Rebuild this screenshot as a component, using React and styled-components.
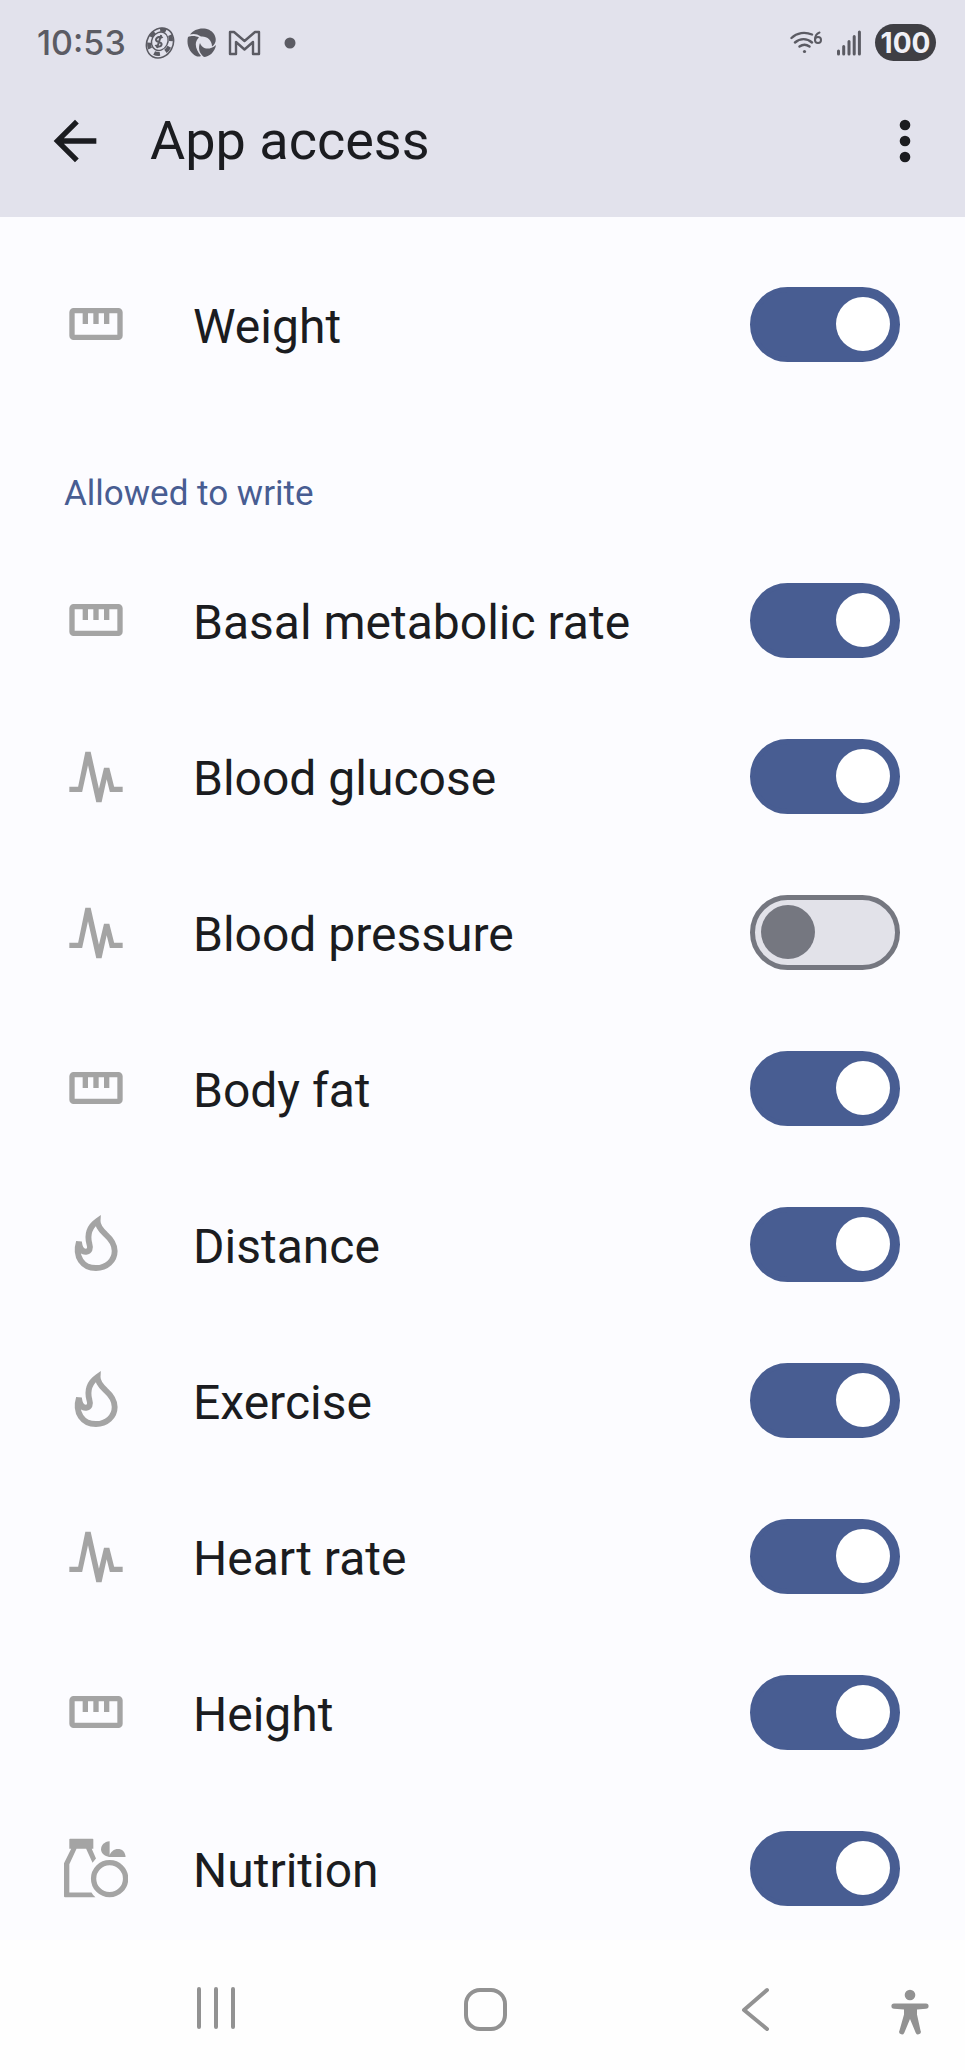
import React, { useState } from "react";
import styled, { createGlobalStyle } from "styled-components";

const GlobalStyle = createGlobalStyle`
  *, *::before, *::after { box-sizing: border-box; }
  body { margin: 0; background: #fcfcff; font-family: Roboto, sans-serif; }
`;

const Screen = styled.div`
  display: flex;
  flex-direction: column;
  height: 100vh;
  color: #1b1c20;
`;

const Header = styled.header`
  flex: none;
  background: #e2e2ec;
`;

const StatusBar = styled.div`
  display: flex;
  align-items: center;
  justify-content: space-between;
  height: 85px;
  padding: 0 29px 0 37px;
  color: #5b5b63;
`;

const StatusGroup = styled.div`
  display: flex;
  align-items: center;
  gap: ${(p) => p.$gap}px;
`;

const Clock = styled.time`
  width: 96px;
  font: 500 34px/40px Inter, sans-serif;
`;

const Battery = styled.span`
  display: flex;
  align-items: center;
  justify-content: center;
  width: 61px;
  height: 37px;
  border-radius: 19px;
  background: #3f3f44;
  color: #f0f0f6;
  font: 700 28px/36px Inter, sans-serif;
`;

const AppBar = styled.div`
  display: flex;
  align-items: center;
  padding: 24px 28px 44px 43px;
`;

const Title = styled.h1`
  flex: 1;
  margin: 0;
  padding-left: 43px;
  font-size: 54px;
  line-height: 64px;
  font-weight: 400;
`;

const IconButton = styled.button`
  display: flex;
  align-items: center;
  justify-content: ${(p) => p.$align || "center"};
  padding: 0;
  border: 0;
  background: none;
  color: inherit;
`;

const Content = styled.main`
  flex: 1;
  min-height: 0;
  overflow-y: auto;
  scrollbar-width: none;
  padding-top: 29px;
`;

const SectionTitle = styled.h2`
  margin: 0;
  padding: 72px 64px 28px;
  color: #485d92;
  font-size: 35px;
  line-height: 40px;
  font-weight: 400;
`;

const List = styled.ul`
  margin: 0;
  padding: 0;
  list-style: none;
`;

const Row = styled.label`
  display: flex;
  align-items: center;
  gap: 65px;
  height: 156px;
  padding: 0 65px 0 64px;
`;

const RowIcon = styled.svg`
  flex: none;
  width: 64px;
  height: 64px;
  color: #a4a4a4;
`;

const RowText = styled.span`
  flex: 1;
  padding-top: 6px;
  font-size: 48px;
  line-height: 60px;
`;

const Switch = styled.input`
  appearance: none;
  flex: none;
  display: grid;
  align-items: center;
  justify-content: start;
  width: 150px;
  height: 75px;
  margin: 0;
  padding: 0 6px;
  border: 5px solid #757780;
  border-radius: 38px;
  background: #e2e2e9;

  &::before {
    content: "";
    width: 54px;
    height: 54px;
    border-radius: 50%;
    background: #757780;
  }

  &:checked {
    justify-content: end;
    padding: 0 5px;
    border-color: #485d92;
    background: #485d92;
  }

  &:checked::before { background: #fff; }
`;

const NavBar = styled.nav`
  flex: none;
  display: grid;
  grid-template-columns: 270fr 270fr 270fr 74fr;
  height: 130px;
  padding: 3px 0 0 81px;
  background: #fefefe;
  color: #929292;
`;

const shapes = {
  ruler: (
    <>
      <rect x="3" y="7" width="18" height="10" rx="0.6" fill="none" stroke="currentColor" strokeWidth="2" />
      <path d="M7 7h2v5H7zM11 7h2v5h-2zM15 7h2v5h-2z" />
    </>
  ),
  pulse: (
    <path d="M2 16H5.3L8 2.9H10L13.1 16.8L15 8.9H17L18.8 16H22V18H17.2L16 13.2L14.1 21.8H12.1L9 8L6.8 18H2Z" />
  ),
  flame: (
    <path
      d="M5.6 11.2C3.9 16.8 7 21 12 21C16 21 19 18.2 19 14.6C19 11.8 17.5 10.1 15.6 8.4C13.7 6.6 12.5 5.2 12.6 3.3C9.6 5.4 8.6 8.4 9.5 11.9C10.1 13.8 9.5 14.8 8.3 14.9C6.8 15 5.9 13.8 5.6 11.2Z"
      fill="none"
      stroke="currentColor"
      strokeWidth="2.2"
    />
  ),
  food: (
    <>
      <path d="M2 1.3Q2 1 2.3 1H10.7Q11 1 11 1.3V4.8H10.4L12 8.4L10.7 10L8.3 4.8H4.7L2 10.6V21.2H10.3Q10.9 22.3 11.8 23H.4Q0 23 0 22.6V10.2L2.7 4.8H2Z" />
      <circle cx="17.1" cy="16" r="6" fill="none" stroke="currentColor" strokeWidth="2" />
      <path d="M17.1 2V7.9C15.1 7.6 13.9 6.5 13.9 5C13.9 3.4 15.1 2.2 17.1 2Z" />
      <path d="M16.7 7.9C17.5 5.9 18.8 4.9 20.2 4.9C21.8 4.9 22.9 5.9 23.1 7.9Z" />
    </>
  ),
};

function ChipIcon() {
  return (
    <svg width="32" height="34" viewBox="0 0 32 34" fill="none" stroke="currentColor" aria-hidden="true">
      <g transform="rotate(28 16 17)">
        <ellipse cx="16" cy="17" rx="13" ry="15.5" strokeWidth="1.6" />
        <ellipse cx="15.5" cy="16" rx="10.5" ry="12.5" strokeWidth="4" strokeDasharray="6 6" />
        <ellipse cx="15" cy="15.5" rx="8" ry="9.5" strokeWidth="1.4" />
      </g>
      <path d="M18.5 12C17 9.6 12.2 11 12 13.8C12 16.8 18 15.400 17.6 18.4C17.2 21.2 12.6 21.4 11.5 18.8M17.2 9L13 22" strokeWidth="2" />
    </svg>
  );
}

function SwirlIcon() {
  return (
    <svg width="30" height="30" viewBox="0 0 30 30" fill="currentColor" aria-hidden="true">
      <path d="M3 6.500C8-1 22-2 27 6C30 11 29 16 25 18.500C25 12 20 8 14 8.500C10 5.500 6 5.500 3 6.500Z" />
      <path d="M1 9C4 7.500 9 7.500 12 9.500C7 14 8 21 14 28C12 29 10 28.500 9 28C3 25 -1 17 1 9Z" />
      <path d="M29 17C28 24 22 29 17 29C12 25 11 20 13 15C15 21 22 23 29 17Z" />
    </svg>
  );
}

function MailIcon() {
  return (
    <svg width="33" height="26" viewBox="0 0 33 26" fill="none" stroke="currentColor" strokeWidth="2.4" strokeLinejoin="round" aria-hidden="true">
      <path d="M2 24V2H6L16.5 11L27 2H31V24H25V12L16.5 19.5L8 12V24Z" />
    </svg>
  );
}

function WifiIcon() {
  return (
    <svg width="33" height="26" viewBox="0 0 33 26" fill="none" stroke="currentColor" strokeWidth="2.4" strokeLinecap="round" aria-hidden="true">
      <path d="M1.5 8C7 2.5 15 1.5 22 4.5M5 12.5C10 8 17 8 22 12.5M9.5 16.5C13 14 16 14 19.5 16.5" />
      <circle cx="14.5" cy="21.5" r="1.6" fill="currentColor" stroke="none" />
      <circle cx="28" cy="10" r="3" strokeWidth="2" />
      <path d="M25 10C25 6 26.5 3.5 29.5 2.5" strokeWidth="2" />
    </svg>
  );
}

function SignalIcon() {
  return (
    <svg width="24" height="26" viewBox="0 0 24 26" stroke="currentColor" strokeWidth="3" strokeLinecap="round" aria-hidden="true">
      <path d="M1.5 21V24M6.7 16.5V24M12 11.5V24M17.2 6.5V24M22.4 2V24" />
    </svg>
  );
}

function Permission({ icon, name, initial = true }) {
  const [on, setOn] = useState(initial);
  return (
    <Row>
      <RowIcon viewBox="0 0 24 24" fill="currentColor" aria-hidden="true">
        {shapes[icon]}
      </RowIcon>
      <RowText>{name}</RowText>
      <Switch type="checkbox" checked={on} onChange={(e) => setOn(e.target.checked)} />
    </Row>
  );
}

const writePermissions = [
  { icon: "ruler", name: "Basal metabolic rate" },
  { icon: "pulse", name: "Blood glucose" },
  { icon: "pulse", name: "Blood pressure", initial: false },
  { icon: "ruler", name: "Body fat" },
  { icon: "flame", name: "Distance" },
  { icon: "flame", name: "Exercise" },
  { icon: "pulse", name: "Heart rate" },
  { icon: "ruler", name: "Height" },
  { icon: "food", name: "Nutrition" },
];

export default function App() {
  return (
    <Screen>
      <GlobalStyle />
      <Header>
        <StatusBar>
          <StatusGroup $gap={11}>
            <Clock>10:53</Clock>
            <ChipIcon />
            <SwirlIcon />
            <MailIcon />
            <svg width="46" height="12" viewBox="0 0 46 12" fill="currentColor" aria-hidden="true">
              <circle cx="18" cy="6" r="5.5" />
            </svg>
          </StatusGroup>
          <StatusGroup $gap={14}>
            <WifiIcon />
            <SignalIcon />
            <Battery>100</Battery>
          </StatusGroup>
        </StatusBar>
        <AppBar>
          <IconButton aria-label="Back">
            <svg width="64" height="64" viewBox="0 0 24 24" fill="currentColor">
              <path d="M20 11H7.83L13.42 5.41L12 4L4 12L12 20L13.41 18.59L7.83 13H20Z" />
            </svg>
          </IconButton>
          <Title>App access</Title>
          <IconButton aria-label="More options">
            <svg width="64" height="64" viewBox="0 0 24 24" fill="currentColor">
              <circle cx="12" cy="6" r="2" />
              <circle cx="12" cy="12" r="2" />
              <circle cx="12" cy="18" r="2" />
            </svg>
          </IconButton>
        </AppBar>
      </Header>
      <Content>
        <Permission icon="ruler" name="Weight" />
        <SectionTitle>Allowed to write</SectionTitle>
        <List>
          {writePermissions.map((p) => (
            <li key={p.name}>
              <Permission {...p} />
            </li>
          ))}
        </List>
      </Content>
      <NavBar aria-label="System">
        <IconButton aria-label="Recent apps">
          <svg width="44" height="44" viewBox="0 0 44 44" stroke="currentColor" strokeWidth="4" strokeLinecap="round">
            <path d="M5 4V42M22 4V42M39 4V42" />
          </svg>
        </IconButton>
        <IconButton aria-label="Home">
          <svg width="44" height="52" viewBox="0 0 44 52" fill="none" stroke="currentColor" strokeWidth="4">
            <rect x="2" y="9" width="39" height="39" rx="14" />
          </svg>
        </IconButton>
        <IconButton aria-label="Back">
          <svg width="44" height="52" viewBox="0 0 44 52" fill="none" stroke="currentColor" strokeWidth="4" strokeLinecap="round" strokeLinejoin="round">
            <path d="M33 9L10 29L33 48" />
          </svg>
        </IconButton>
        <IconButton aria-label="Accessibility" $align="start">
          <svg width="38" height="64" viewBox="0 0 38 64" fill="currentColor">
            <circle cx="19" cy="20" r="5.3" />
            <path d="M3 28.5H35A2.600 2.600 0 0 1 35 33.700L26 34.500V39.500L29.500 55.500A2.500 2.500 0 0 1 24.800 58L19 44L13.200 58A2.500 2.500 0 0 1 8.500 55.500L13 39.500V34.500L3 33.700A2.600 2.600 0 0 1 3 28.500Z" />
          </svg>
        </IconButton>
      </NavBar>
    </Screen>
  );
}
